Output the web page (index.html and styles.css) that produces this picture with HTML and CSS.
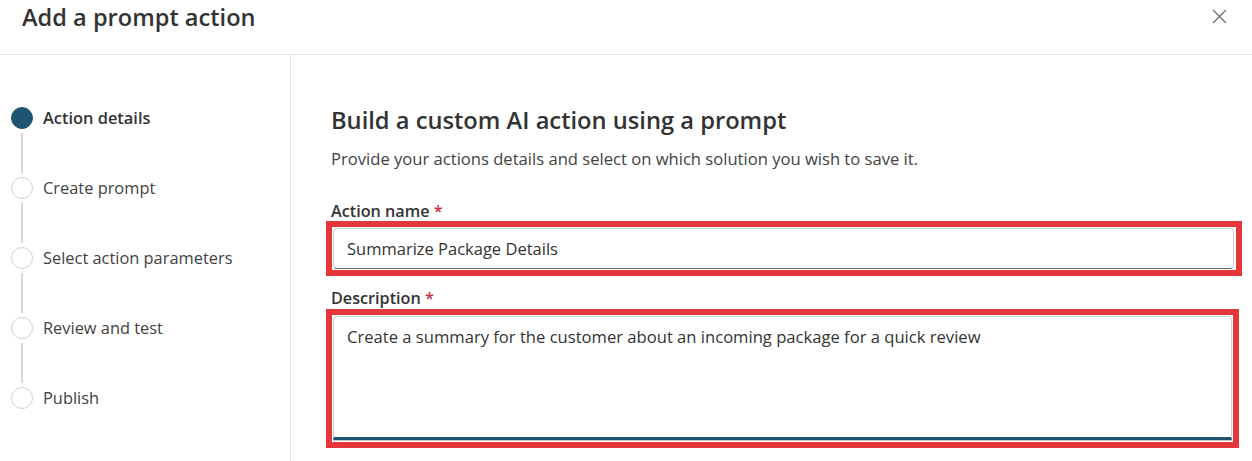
FILE: index.html
```html
<!DOCTYPE html>
<html lang="en">
<head>
<meta charset="utf-8">
<title>Add a prompt action</title>
<link rel="stylesheet" href="styles.css">
</head>
<body>
<div class="dialog">
  <header class="dialog-header">
    <h1 class="dialog-title">Add a prompt action</h1>
    <button class="close-btn" aria-label="Close">
      <svg width="16" height="16" viewBox="0 0 16 16"><path d="M1.5 1.5 L14.5 14.5 M14.5 1.5 L1.5 14.5" stroke="#616161" stroke-width="1.4" fill="none" stroke-linecap="round"/></svg>
    </button>
  </header>
  <div class="dialog-body">
    <nav class="stepper">
      <div class="step step-active"><span class="step-dot"></span><span class="step-label">Action details</span></div>
      <div class="step-line"></div>
      <div class="step"><span class="step-dot"></span><span class="step-label">Create prompt</span></div>
      <div class="step-line"></div>
      <div class="step"><span class="step-dot"></span><span class="step-label">Select action parameters</span></div>
      <div class="step-line"></div>
      <div class="step"><span class="step-dot"></span><span class="step-label">Review and test</span></div>
      <div class="step-line"></div>
      <div class="step"><span class="step-dot"></span><span class="step-label">Publish</span></div>
    </nav>
    <main class="content">
      <h2 class="content-title">Build a custom AI action using a prompt</h2>
      <p class="content-sub">Provide your actions details and select on which solution you wish to save it.</p>
      <label class="field-label">Action name <span class="req">*</span></label>
      <div class="highlight highlight-name">
        <div class="text-input">Summarize Package Details</div>
      </div>
      <label class="field-label field-label-desc">Description <span class="req">*</span></label>
      <div class="highlight highlight-desc">
        <div class="text-area">Create a summary for the customer about an incoming package for a quick review</div>
      </div>
    </main>
  </div>
</div>
</body>
</html>
```
FILE: styles.css
```css
* { box-sizing: border-box; }
html, body { margin: 0; padding: 0; background: #ffffff; }
body {
  font-family: "Open Sans", "Noto Sans", "Liberation Sans", sans-serif;
  color: #242424;
  width: 1252px;
  height: 461px;
  overflow: hidden;
}
.dialog { display: flex; flex-direction: column; height: 461px; }
.dialog-header {
  height: 55px;
  border-bottom: 1px solid #e0e0e0;
  display: flex;
  align-items: flex-start;
  justify-content: space-between;
  padding: 0 25px 0 22px;
  flex: none;
}
.dialog-title {
  margin: 0;
  padding-top: 1px;
  font-size: 23.6px;
  font-weight: 600;
  line-height: 32px;
  color: #333333;
}
.close-btn {
  background: none;
  border: none;
  padding: 0;
  margin-top: 9px;
  width: 15px;
  height: 15px;
  display: flex;
}
.close-btn svg { width: 15px; height: 15px; }
.dialog-body { display: flex; flex: 1; }
.stepper {
  width: 291px;
  flex: none;
  border-right: 1px solid #e0e0e0;
  padding: 52px 0 0 11px;
  display: flex;
  flex-direction: column;
}
.step { display: flex; align-items: center; gap: 10px; height: 22px; }
.step-dot {
  width: 22px;
  height: 22px;
  border-radius: 50%;
  border: 1px solid #d1d1d1;
  background: #fff;
  flex: none;
}
.step-active .step-dot { background: #1d5470; border-color: #1d5470; }
.step-label { font-size: 16.4px; color: #424242; line-height: 22px; }
.step-active .step-label { font-weight: 600; color: #333333; }
.step-line {
  width: 2px;
  height: 40px;
  margin: 4px 0 4px 10px;
  background: #d6d6d6;
}
.content { flex: 1; padding: 51px 0 0 40px; display: flex; flex-direction: column; }
.content-title {
  margin: 0;
  font-size: 23.7px;
  font-weight: 600;
  line-height: 28px;
  color: #333333;
}
.content-sub {
  margin: 14px 0 0;
  font-size: 16.6px;
  line-height: 22px;
  color: #424242;
}
.field-label {
  display: block;
  margin-top: 31px;
  font-size: 16.2px;
  font-weight: 600;
  line-height: 20px;
  color: #333333;
}
.field-label-desc { margin-top: 12px; }
.req { color: #c4314b; }
.highlight {
  margin-left: -5px;
  border: 6px solid #e5363b;
}
.highlight-name {
  width: 916px;
  height: 55px;
  margin-top: 0;
  padding: 1px 2px 0 1px;
}
.highlight-desc {
  width: 913px;
  height: 139px;
  margin-top: 1px;
  padding: 1px 1px 1px 1px;
}
.text-input {
  height: 41px;
  border: 1px solid #d1d1d1;
  border-bottom: 1px solid #616161;
  border-radius: 4px;
  padding: 0 13px;
  font-size: 16.5px;
  line-height: 39px;
  color: #333333;
}
.text-area {
  height: 124px;
  border: 1px solid #d1d1d1;
  border-bottom: 3px solid #1d5470;
  border-radius: 4px 4px 0 0;
  padding: 8px 13px;
  font-size: 16.6px;
  line-height: 24px;
  color: #333333;
  box-shadow: 0 1px 0 #c8c8c8;
}
```
